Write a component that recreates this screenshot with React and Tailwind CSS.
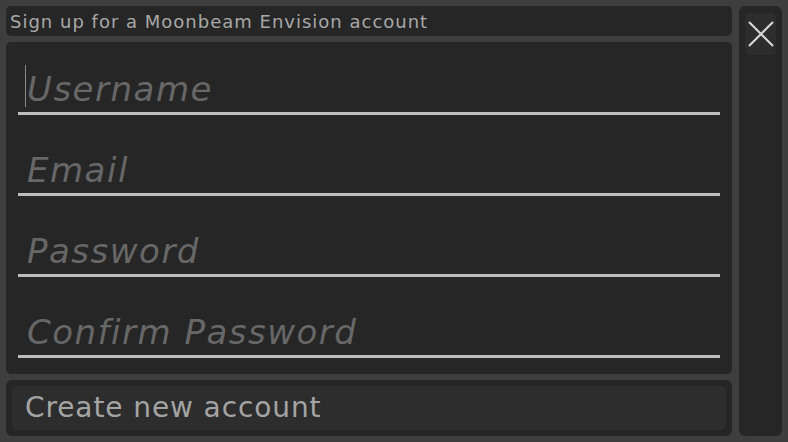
import React from 'react';

const fields = ['Username', 'Email', 'Password', 'Confirm Password'];

const Field = ({ placeholder, type = 'text', showCaret }) => (
  <div className="flex items-end h-[60px] border-b-[3px] border-[#bdbdbd] pl-[7px] pb-px">
    {showCaret && <div className="w-px h-[42px] bg-[#8a8a8a] mb-[4px] -mr-px" />}
    <input
      type={type}
      placeholder={placeholder}
      className="w-full bg-transparent outline-none text-[34px] leading-[44px] tracking-[1.5px] italic text-[#9a9a9a] placeholder:text-[#676767] pl-[2px]"
      style={{ fontFamily: '"DejaVu Sans", sans-serif' }}
    />
  </div>
);

export default function App() {
  return (
    <div
      className="w-[788px] h-[442px] bg-[#3e3e3e] p-[6px] flex gap-[7px] overflow-hidden"
      style={{ fontFamily: '"DejaVu Sans", sans-serif' }}
    >
      <div className="flex-1 flex flex-col gap-[6px]">
        {/* Title */}
        <div className="h-[30px] rounded-[5px] bg-[#262626] flex items-center px-[4px]">
          <span className="text-[18px] tracking-[1px] text-[#a8a8a8]">Sign up for a Moonbeam Envision account</span>
        </div>

        {/* Form */}
        <div className="h-[332px] rounded-[5px] bg-[#262626] pt-[13px] pl-[12px] pr-[12px] flex flex-col gap-[21px]">
          {fields.map((f, i) => (
            <Field
              key={f}
              placeholder={f}
              type={f.includes('Password') ? 'password' : f === 'Email' ? 'email' : 'text'}
              showCaret={i === 0}
            />
          ))}
        </div>

        {/* Create button */}
        <div className="flex-1 rounded-[6px] bg-[#262626] p-[6px]">
          <button className="w-full h-full rounded-[5px] bg-[#2d2d2d] text-left pl-[13px] text-[28px] tracking-[0.9px] text-[#a4a4a4]">
            Create new account
          </button>
        </div>
      </div>

      {/* Right column */}
      <div className="w-[43px] rounded-[6px] bg-[#262626] p-[6px] pt-[7px]">
        <button className="w-[31px] h-[42px] rounded-[5px] bg-[#2d2d2d] flex items-center justify-center">
          <svg width="28" height="28" viewBox="0 0 28 28">
            <path d="M2 2 L26 26 M26 2 L2 26" stroke="#d6d6d6" strokeWidth="2.2" />
          </svg>
        </button>
      </div>
    </div>
  );
}
